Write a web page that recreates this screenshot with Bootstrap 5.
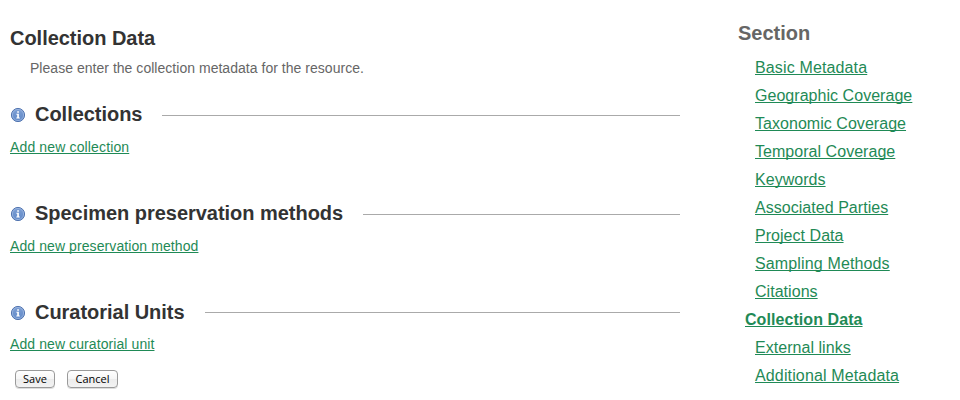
<!DOCTYPE html>
<html lang="en">
<head>
<meta charset="utf-8">
<title>Collection Data</title>
<link href="https://cdn.jsdelivr.net/npm/bootstrap@5.3.0/dist/css/bootstrap.min.css" rel="stylesheet">
<style>
body{font-family:"Liberation Sans",Arial,sans-serif;font-size:14px;line-height:20px;color:#666;background:#fff;overflow:hidden}
.page-wrap{width:960px;height:400px}
.main-col{width:670px;margin-left:10px;padding-top:26px}
.side-col{margin-left:58px;padding-top:21px}
h1,h2,h3{font-size:20px;line-height:24px;font-weight:700;color:#333;white-space:nowrap}
h1,h2{letter-spacing:-.03px}
.side-col h3{color:#666}
a,a:hover{color:#1f8a56;text-decoration:underline;text-decoration-skip-ink:none;text-decoration-thickness:1px;text-underline-offset:1px}
.intro{margin:8px 0 0 20px;letter-spacing:.03px}
.group{height:99px}
.group.last{height:98px}
.groups{margin-top:24px}
.group .info{width:16px;height:16px;margin-right:9px;margin-top:1px;flex:none}
.rule{height:1px;background:#aaa;margin-left:19.5px;margin-top:2px}
.last .rule{margin-left:20px;margin-top:0}
.add{margin-top:11px;line-height:20px;letter-spacing:.09px}
.first .add{letter-spacing:.14px}
.last .add{margin-top:10px}
.actions{margin-left:5px;margin-top:-28px;gap:12px}
.mac-btn{height:18px;padding:0 0 1px;border:1px solid #9a9a9a;border-radius:4px;background:linear-gradient(#fff,#f6f6f6 49%,#ececec 51%,#f3f3f3);color:#000;font:500 11px/14px "Open Sans","Noto Sans",sans-serif;box-shadow:0 1px 0 #ddd}
.save{width:40px}.cancel{width:51px}
.sections{margin:9px 0 0 17px}
.sections li{height:28px;line-height:28px;font-size:16px;white-space:nowrap;letter-spacing:.04px}
.sections .wide{letter-spacing:.14px}
.sections .current{margin-left:-10px;font-weight:700;letter-spacing:.07px}
</style>
</head>
<body>
<svg width="0" height="0" class="position-absolute" aria-hidden="true">
<defs><linearGradient id="blue" x2="0" y2="1"><stop stop-color="#7d9fd4"/><stop offset="1" stop-color="#6189c8"/></linearGradient>
<symbol id="info" viewBox="0 0 16 16"><circle cx="8" cy="8" r="6.6" fill="url(#blue)" stroke="#5275b0"/><circle cx="8" cy="8" r="5.6" fill="none" stroke="#a3bbe2" stroke-width=".7"/><path d="M7.2 4.2h1.7v1.6H7.2zM6.4 6.8h2.5v3.8h.9v.9H6.3v-.9h.9V7.7h-.8z" fill="#fff"/></symbol></defs>
</svg>
<div class="page-wrap d-flex">
<main class="main-col">
<h1 class="mb-0">Collection Data</h1>
<p class="intro mb-0">Please enter the collection metadata for the resource.</p>
<div class="groups">
<section class="group first"><div class="d-flex align-items-center"><svg class="info"><use href="#info"/></svg><h2 class="mb-0">Collections</h2><div class="rule flex-grow-1"></div></div><div class="add"><a href="#">Add new collection</a></div></section>
<section class="group"><div class="d-flex align-items-center"><svg class="info"><use href="#info"/></svg><h2 class="mb-0">Specimen preservation methods</h2><div class="rule flex-grow-1"></div></div><div class="add"><a href="#">Add new preservation method</a></div></section>
<section class="group last"><div class="d-flex align-items-center"><svg class="info"><use href="#info"/></svg><h2 class="mb-0">Curatorial Units</h2><div class="rule flex-grow-1"></div></div><div class="add"><a href="#">Add new curatorial unit</a></div></section>
</div>
<div class="actions d-flex"><button class="mac-btn save">Save</button><button class="mac-btn cancel">Cancel</button></div>
</main>
<aside class="side-col">
<h3 class="mb-0">Section</h3>
<ul class="sections list-unstyled">
<li class="wide"><a href="#">Basic Metadata</a></li>
<li><a href="#">Geographic Coverage</a></li>
<li><a href="#">Taxonomic Coverage</a></li>
<li><a href="#">Temporal Coverage</a></li>
<li><a href="#">Keywords</a></li>
<li><a href="#">Associated Parties</a></li>
<li><a href="#">Project Data</a></li>
<li class="wide"><a href="#">Sampling Methods</a></li>
<li><a href="#">Citations</a></li>
<li class="current"><a href="#">Collection Data</a></li>
<li><a href="#">External links</a></li>
<li class="wide"><a href="#">Additional Metadata</a></li>
</ul>
</aside>
</div>
<script src="https://cdn.jsdelivr.net/npm/bootstrap@5.3.0/dist/js/bootstrap.bundle.min.js"></script>
</body>
</html>
